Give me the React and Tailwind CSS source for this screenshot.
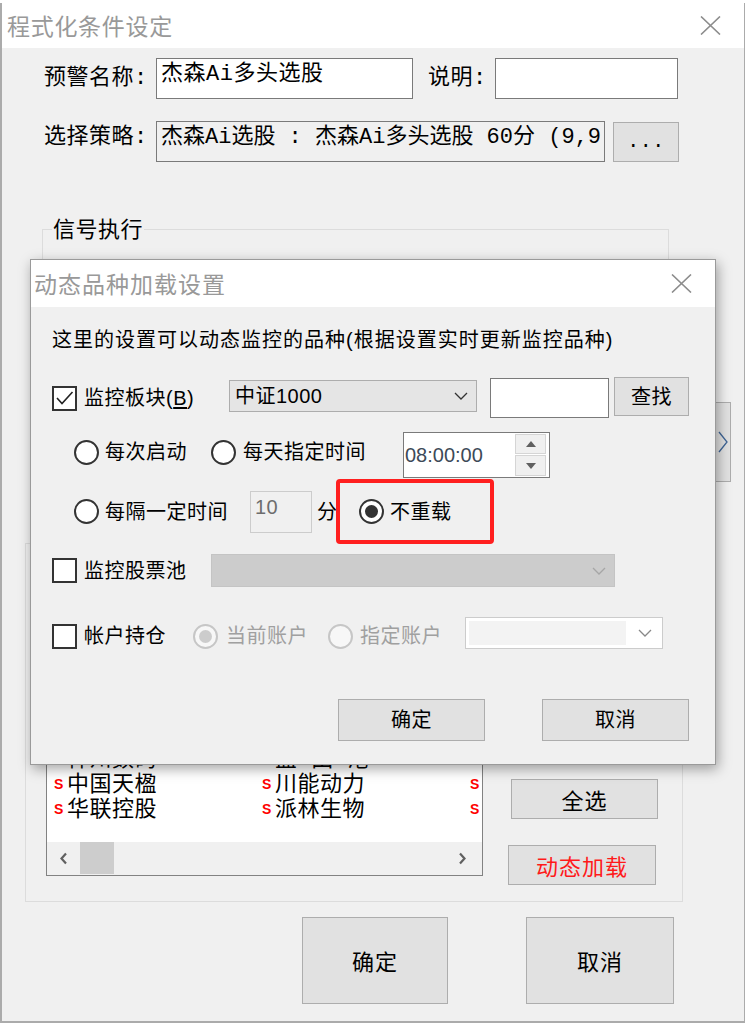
import clsx from 'clsx'

const OUT = "font-['Liberation_Mono','Noto_Sans_CJK_SC',monospace] text-[22px] tracking-[0.5px] text-black"
const SANS = "font-['Liberation_Sans','Noto_Sans_CJK_SC',sans-serif]"

function XIcon({ size = 21 }) {
  return (
    <svg width={size} height={size - 2} viewBox="0 0 21 19">
      <path d="M1 0.5 L20 18.5 M20 0.5 L1 18.5" stroke="#8c8c8c" strokeWidth="1.6" fill="none" />
    </svg>
  )
}

function Chevron({ color = '#333', w = 14 }) {
  return (
    <svg width={w} height="8" viewBox="0 0 14 8">
      <path d="M1 1 L7 7 L13 1" stroke={color} strokeWidth="1.3" fill="none" />
    </svg>
  )
}

function Check({ checked }) {
  return (
    <span className="flex h-[25px] w-[25px] shrink-0 items-center justify-center border-2 border-[#333] bg-white">
      {checked && (
        <svg width="19" height="16" viewBox="0 0 19 16">
          <path d="M2 8 L7 13.5 L17.5 2" fill="none" stroke="#222" strokeWidth="1.6" />
        </svg>
      )}
    </span>
  )
}

function Radio({ checked, disabled }) {
  return (
    <span
      className={clsx(
        'flex h-[25px] w-[25px] shrink-0 items-center justify-center rounded-full border-2',
        disabled ? 'border-[#c6c6c6] bg-[#f7f7f7]' : 'border-[#333] bg-white'
      )}
    >
      {checked && (
        <span className={clsx('h-[13px] w-[13px] rounded-full', disabled ? 'bg-[#cccccc]' : 'bg-[#333]')} />
      )}
    </span>
  )
}

function Btn({ className, children }) {
  return (
    <div className={clsx('flex shrink-0 items-center justify-center border border-[#adadad] bg-[#e1e1e1]', className)}>
      {children}
    </div>
  )
}

// third column is cut by the list edge, only its marker shows
const rows = [
  ['深天马Ａ', '中国长城', ''],
  ['中兴通讯', '华天科技', ''],
  ['神州数码', '盐 田 港', ''],
  ['中国天楹', '川能动力', ''],
  ['华联控股', '派林生物', ''],
]

function StockList() {
  return (
    <div className="mb-[25px] flex h-[300px] w-[437px] flex-col self-end border border-[#828282] bg-white">
      <div className="flex flex-1 flex-col justify-end overflow-hidden pb-[19px]">
        {rows.map((r) => (
          <div key={r[0]} className="grid h-[25px] grid-cols-[208px_208px_20px] pl-[7px]">
            {r.map((name, i) => (
              <div key={i} className="flex h-[25px] items-start">
                <span className={`${SANS} mt-[4px] w-[13px] text-[14px] font-bold leading-none text-[#ff0000]`}>S</span>
                {name && <span className={`${OUT} whitespace-pre leading-[25px]`}>{name}</span>}
              </div>
            ))}
          </div>
        ))}
      </div>
      <div className="flex h-[33px] items-stretch bg-[#f0f0f0]">
        <span className="ml-[12px] flex items-center">
          <svg width="9" height="13" viewBox="0 0 9 13">
            <path d="M7 1.5 L2.5 6.5 L7 11.5" stroke="#606060" strokeWidth="2.2" fill="none" />
          </svg>
        </span>
        <span className="mb-[1px] ml-[12px] w-[34px] bg-[#cdcdcd]" />
        <span className="flex-1" />
        <span className="mr-[15px] flex items-center">
          <svg width="9" height="13" viewBox="0 0 9 13">
            <path d="M2 1.5 L6.5 6.5 L2 11.5" stroke="#606060" strokeWidth="2.2" fill="none" />
          </svg>
        </span>
      </div>
    </div>
  )
}

function LoadDialog() {
  return (
    <div
      className={`${SANS} absolute left-[30px] top-[259px] flex h-[506px] w-[686px] flex-col border border-[#9a9a9a] text-[20px] tracking-[0.5px] text-black shadow-[2px_4px_12px_rgba(0,0,0,0.35)]`}
    >
      <div className="flex h-[47px] shrink-0 items-center justify-between bg-white pl-[3px] pr-[23px]">
        <span className="font-['Noto_Sans_CJK_SC',sans-serif] text-[23px] tracking-[1px] text-[#999]">动态品种加载设置</span>
        <XIcon />
      </div>
      <div className="flex flex-1 flex-col bg-[#f0f0f0]">
        <div className="pl-[21px] pt-[19px] leading-[28px] tracking-[1px]">
          这里的设置可以动态监控的品种(根据设置实时更新监控品种)
        </div>

        <div className="mt-[23px] flex h-[42px] items-center pl-[21px]">
          <Check checked />
          <span className="ml-[7px] w-[145px]">
            监控板块(<span className="underline underline-offset-2">B</span>)
          </span>
          <div className="mb-[5px] flex h-[32px] w-[248px] items-center justify-between border border-[#adadad] bg-[#e5e5e5] pl-[5px] pr-[8px]">
            <span>中证1000</span>
            <Chevron />
          </div>
          <div className="ml-[13px] h-[40px] w-[119px] border border-[#7a7a7a] bg-white" />
          <Btn className="mb-[3px] ml-[5px] h-[39px] w-[75px]">查找</Btn>
        </div>

        <div className="mt-[13px] flex h-[46px] items-center pl-[43px]">
          <span className="mb-[6px] flex items-center">
            <Radio />
            <span className="ml-[6px] w-[106px]">每次启动</span>
            <Radio />
            <span className="ml-[7px] w-[160px]">每天指定时间</span>
          </span>
          <div className="flex h-[46px] w-[147px] items-center border border-[#7a7a7a] bg-white">
            <span className="pl-[1px] tracking-normal text-[#3d4a58]">08:00:00</span>
            <div className="ml-auto mr-[3px] flex flex-col gap-[1px]">
              <div className="flex h-[20px] w-[31px] items-center justify-center border border-[#d5d5d5] bg-[#f0f0f0]">
                <svg width="10" height="6" viewBox="0 0 10 6"><path d="M0 6 L5 0 L10 6 Z" fill="#606060" /></svg>
              </div>
              <div className="flex h-[21px] w-[31px] items-center justify-center border border-[#d5d5d5] bg-[#f0f0f0]">
                <svg width="10" height="6" viewBox="0 0 10 6"><path d="M0 0 L5 6 L10 0 Z" fill="#606060" /></svg>
              </div>
            </div>
          </div>
        </div>

        <div className="mt-[1px] flex h-[65px] items-center pl-[43px]">
          <Radio />
          <span className="ml-[6px] w-[145px]">每隔一定时间</span>
          <div className="h-[42px] w-[62px] border border-[#cccccc] bg-[#f0f0f0] pl-[4px] pt-[1px] leading-[28px] text-[#6d6d6d]">10</div>
          <span className="ml-[5px] w-[19px] overflow-hidden">分</span>
          <div className="flex h-[65px] w-[158px] items-center rounded-[4px] border-4 border-[#ff1f1f] pl-[19px]">
            <Radio checked />
            <span className="ml-[6px]">不重载</span>
          </div>
        </div>

        <div className="mt-[10px] flex h-[33px] items-center pl-[21px]">
          <Check />
          <span className="ml-[7px] w-[127px]">监控股票池</span>
          <div className="flex h-[33px] w-[404px] items-center justify-end border border-[#c4c4c4] bg-[#cccccc] pr-[8px]">
            <Chevron color="#a6a6a6" />
          </div>
        </div>

        <div className="mt-[33px] flex h-[32px] items-center pl-[21px]">
          <Check />
          <span className="ml-[7px] w-[109px]">帐户持仓</span>
          <Radio checked disabled />
          <span className="ml-[8px] w-[102px] text-[#a0a0a0]">当前账户</span>
          <Radio disabled />
          <span className="ml-[7px] w-[105px] text-[#a0a0a0]">指定账户</span>
          <div className="-mt-[6px] flex h-[32px] w-[198px] items-center border border-[#cccccc] bg-white p-[3px]">
            <div className="h-full w-[157px] bg-[#f3f3f3]" />
            <span className="ml-auto mr-[7px]">
              <Chevron color="#888" />
            </span>
          </div>
        </div>

        <div className="mt-[47px] flex h-[42px] pl-[307px]">
          <Btn className="h-[42px] w-[147px]">确定</Btn>
          <Btn className="ml-[57px] h-[42px] w-[147px]">取消</Btn>
        </div>
      </div>
    </div>
  )
}

export default function App() {
  return (
    <div className="relative h-[1023px] w-[745px] overflow-hidden bg-white">
      <div className={`${OUT} flex h-[3px] overflow-hidden text-[#333]`}>
        <span className="-mt-[19px] ml-[176px] leading-[22px]">条件选股</span>
        <span className="-mt-[19px] ml-[86px] leading-[22px]">周期</span>
        <span className="-mt-[19px] ml-[73px] leading-[22px]">日</span>
        <span className="-mt-[19px] ml-[116px] leading-[22px]">公式说明</span>
      </div>

      <div className="flex h-[1020px] flex-col border-b-2 border-l-2 border-r border-[#ababab]">
        <div className="flex h-[45px] shrink-0 items-center justify-between bg-white pl-[5px] pr-[23px]">
          <span className="font-['Noto_Sans_CJK_SC',sans-serif] text-[23px] tracking-[0.7px] text-[#999]">程式化条件设定</span>
          <XIcon />
        </div>

        <div className={`${OUT} flex flex-1 flex-col bg-[#f0f0f0]`}>
          <div className="flex items-center pl-[42px] pt-[10px]">
            <span className="w-[112px]">预警名称:</span>
            <div className="h-[41px] w-[257px] border border-[#7a7a7a] bg-white pl-[4px] pt-[2px] leading-[28px]">杰森Ai多头选股</div>
            <span className="ml-[15px] w-[67px]">说明:</span>
            <div className="h-[41px] w-[183px] border border-[#7a7a7a] bg-white" />
          </div>

          <div className="mt-[22px] flex items-start pl-[42px]">
            <span className="mt-[3px] w-[112px] leading-[28px]">选择策略:</span>
            <div className="h-[41px] w-[449px] overflow-hidden border border-[#7a7a7a] bg-[#f0f0f0] pl-[4px] pt-[2px]">
              <div className="w-[440px] overflow-hidden whitespace-pre leading-[28px] tracking-normal">杰森Ai选股 : 杰森Ai多头选股 60分 (9,9</div>
            </div>
            <Btn className="ml-[8px] mt-[1px] h-[40px] w-[66px] font-['Liberation_Mono',monospace] text-[20px]">...</Btn>
          </div>

          <div className="mt-[67px] flex items-start">
            <div className="ml-[40px] flex h-[301px] w-[627px] flex-col border border-[#dcdcdc]">
              <span className="-mt-[13px] ml-[9px] w-fit bg-[#f0f0f0] px-[1px] leading-[30px]">信号执行</span>
              <div className="ml-[316px] mt-[13px] flex items-center">
                <Radio />
                <span className="ml-[24px]">指定周期执行</span>
              </div>
            </div>
            <Btn className="ml-[46px] mt-[173px] h-[80px] w-[16px]">
              <svg width="10" height="22" viewBox="0 0 10 22">
                <path d="M1 1 L9 11 L1 21" stroke="#3f6596" strokeWidth="1.3" fill="none" />
              </svg>
            </Btn>
          </div>

          <div className="ml-[23px] mt-[13px] flex h-[359px] w-[658px] border border-[#dcdcdc] pl-[20px]">
            <StockList />
            <div className="ml-[28px] flex flex-col">
              <Btn className="mt-[235px] h-[40px] w-[147px] font-['Noto_Sans_CJK_SC',sans-serif] tracking-[1px]">全选</Btn>
              <Btn className="-ml-[3px] mt-[26px] h-[40px] w-[148px] font-['Noto_Sans_CJK_SC',sans-serif] tracking-[1px] text-[#ff1a1a]">动态加载</Btn>
            </div>
          </div>

          <div className="mt-[15px] flex font-['Noto_Sans_CJK_SC',sans-serif] tracking-[1px]">
            <Btn className="ml-[300px] h-[87px] w-[146px]">确定</Btn>
            <Btn className="ml-[78px] h-[87px] w-[148px]">取消</Btn>
          </div>
        </div>
      </div>

      <LoadDialog />
    </div>
  )
}
